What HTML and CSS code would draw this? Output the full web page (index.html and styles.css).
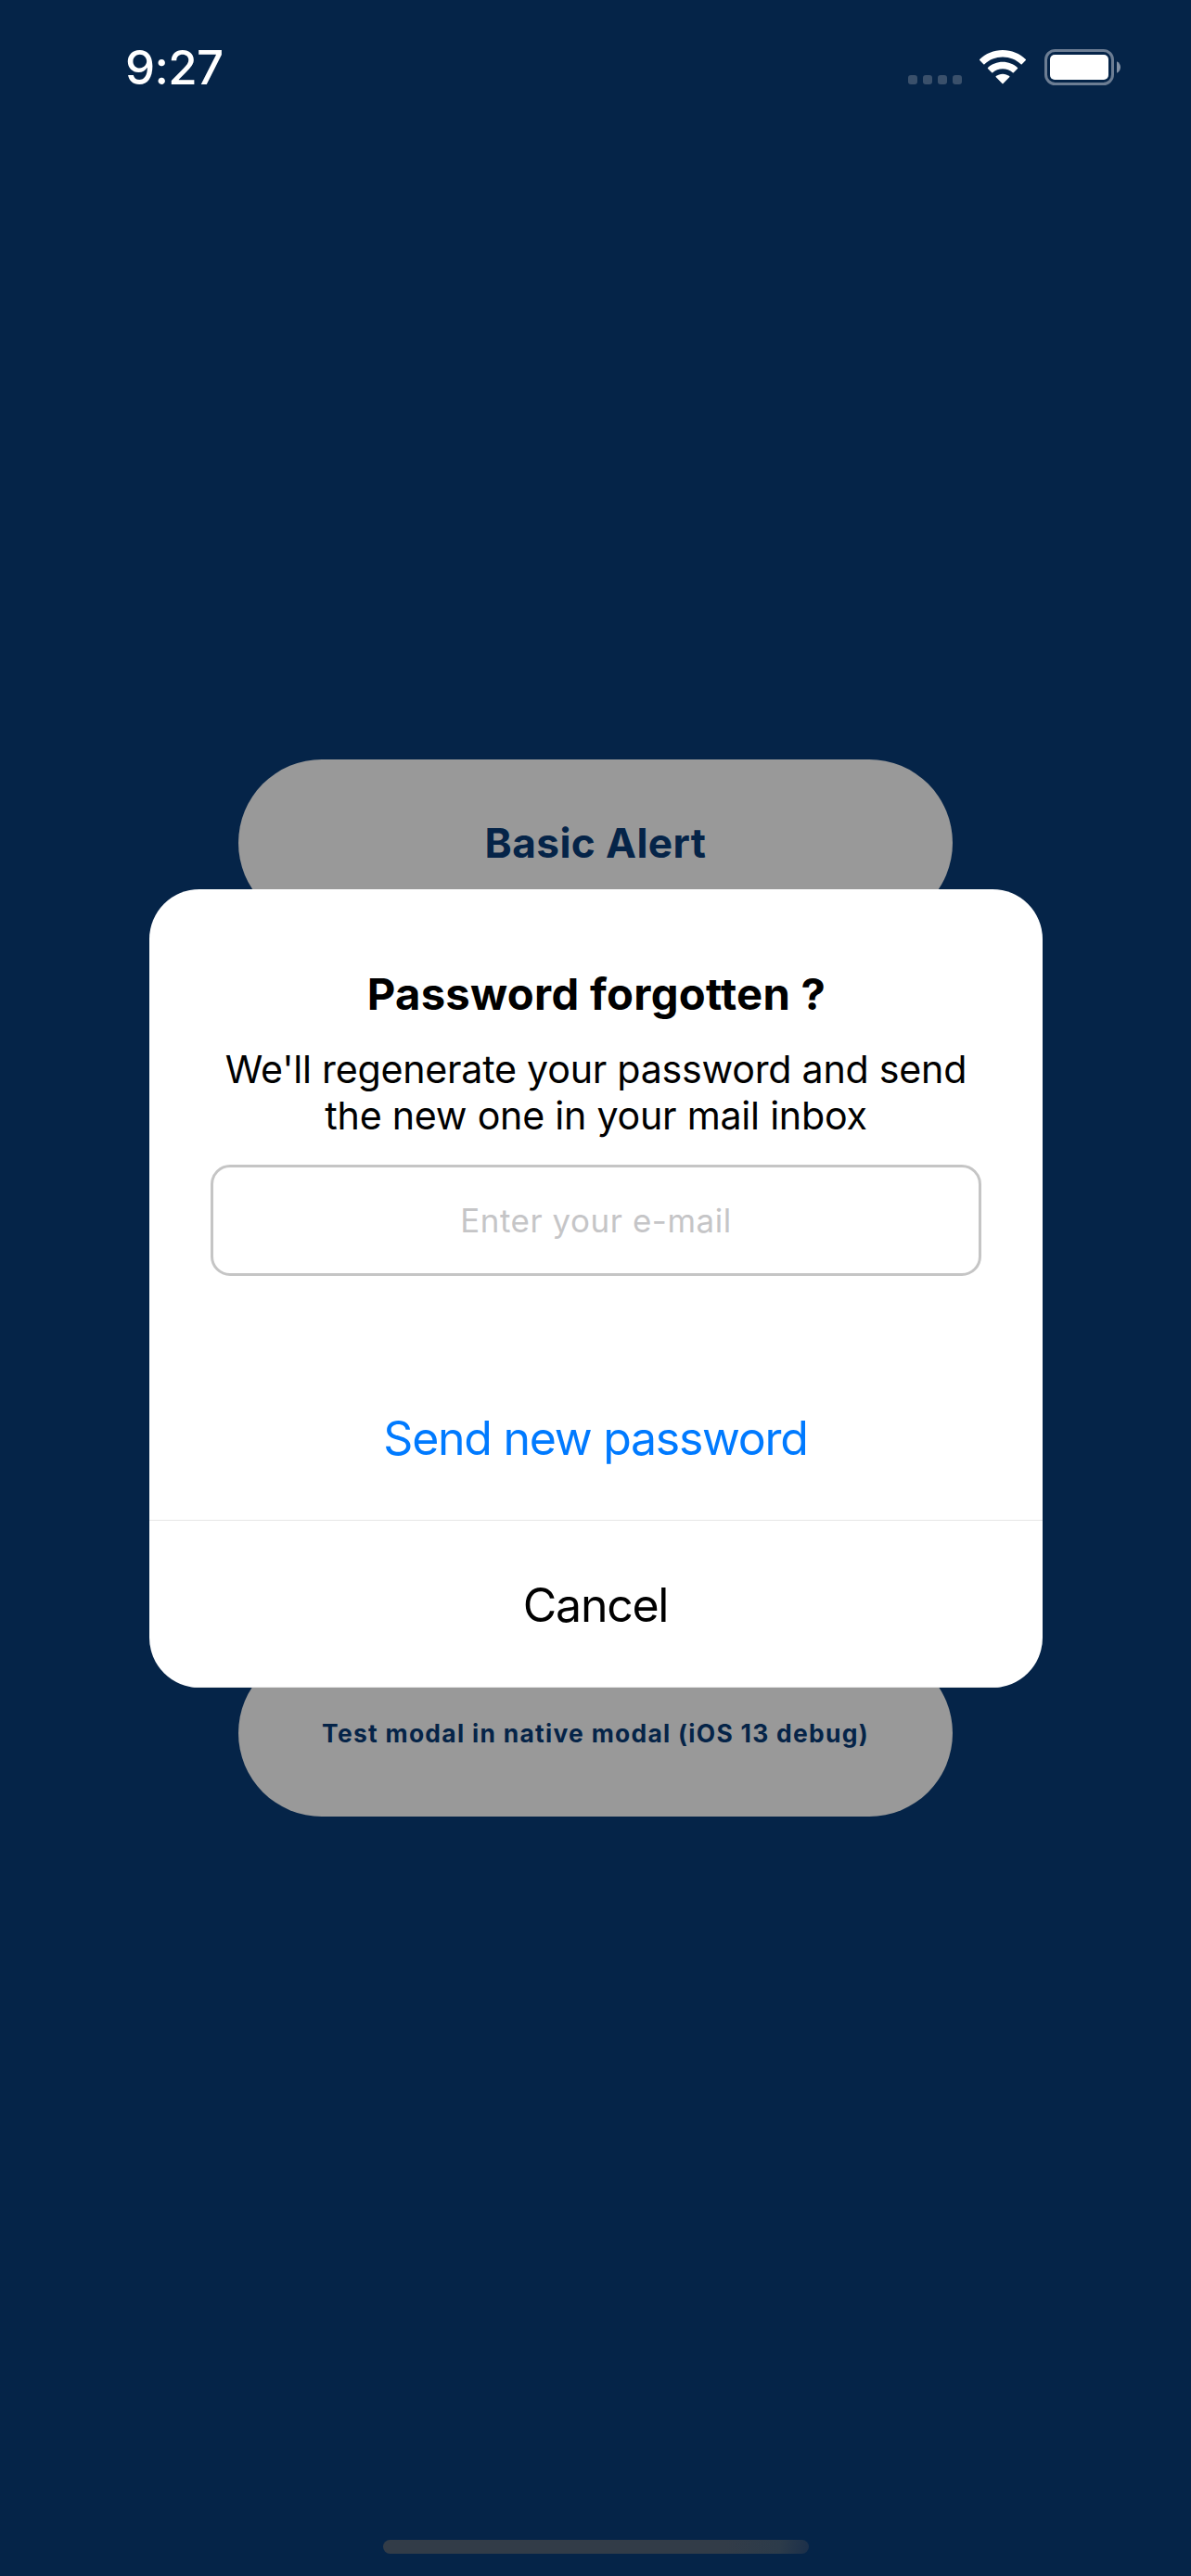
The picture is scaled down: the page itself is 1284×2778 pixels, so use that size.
FILE: index.html
```html
<!DOCTYPE html>
<html lang="en">
<head>
<meta charset="utf-8">
<title>Password forgotten</title>
<link rel="stylesheet" href="styles.css">
</head>
<body>
<header class="status-bar">
  <time class="clock">9:27</time>
  <div class="indicators">
    <div class="signal"><i></i><i></i><i></i><i></i></div>
    <svg class="wifi" viewBox="0 0 50 37" width="50" height="37" fill="#fff">
      <path d="M25 0C34.6 0 43.400 3.800 49.800 9.900Q50.300 10.500 49.800 11.100L45.700 15.200Q45.200 15.600 44.600 15.200C39.400 10.300 32.500 7.500 25 7.500S10.600 10.300 5.400 15.200Q4.800 15.600 4.300 15.200L.2 11.100Q-.3 10.500 .2 9.900C6.600 3.800 15.400 0 25 0Z"/>
      <path d="M25 12.800C31.100 12.800 36.700 15.100 41 18.900Q41.500 19.500 41 20L36.800 24.200Q36.300 24.700 35.700 24.200C32.900 21.700 29.100 20.300 25 20.300S17.100 21.700 14.300 24.200Q13.700 24.700 13.200 24.200L9 20Q8.500 19.500 9 18.900C13.300 15.100 18.900 12.800 25 12.800Z"/>
      <path d="M25 25.700C27.700 25.700 30.200 26.600 32.200 28.100Q32.800 28.700 32.200 29.300L25.600 36.100Q25 36.700 24.400 36.100L17.800 29.300Q17.200 28.700 17.800 28.100C19.800 26.600 22.300 25.700 25 25.700Z"/>
    </svg>
    <svg class="battery" viewBox="0 0 82 39" width="82" height="39">
      <rect x="1.500" y="1.500" width="72" height="36" rx="10" fill="none" stroke="#6c7d93" stroke-width="3"/>
      <rect x="6" y="6" width="63" height="27" rx="5" fill="#fff"/>
      <path d="M78 13.200C80.400 14.200 82 16.700 82 19.500S80.400 24.800 78 25.800Z" fill="#8291a5"/>
    </svg>
  </div>
</header>
<main class="menu">
  <button class="pill">Basic Alert</button>
  <button class="pill pill-small">Test modal in native modal (iOS 13 debug)</button>
</main>
<div class="home-indicator"></div>
<div class="overlay">
  <section class="dialog" role="dialog">
    <div class="dialog-body">
      <h1 class="title">Password forgotten ?</h1>
      <p class="message">We'll regenerate your password and send<br>the new one in your mail inbox</p>
      <input class="email" type="email" placeholder="Enter your e-mail">
    </div>
    <button class="action primary">Send new password</button>
    <button class="action">Cancel</button>
  </section>
</div>
</body>
</html>
```
FILE: styles.css
```css
* { box-sizing: border-box; }

body {
  margin: 0;
  width: 1284px;
  height: 2778px;
  display: flex;
  flex-direction: column;
  align-items: center;
  background: #052448;
  font-family: Inter, "Liberation Sans", sans-serif;
  overflow: hidden;
}

button, input {
  margin: 0;
  border: 0;
  background: none;
  font-family: inherit;
}

.status-bar {
  width: 100%;
  height: 819px;
  padding: 43px 76px 0 135px;
  display: flex;
  justify-content: space-between;
  align-items: flex-start;
}

.clock {
  color: #fff;
  font-size: 51px;
  font-weight: 550;
  line-height: 60px;
  letter-spacing: -0.7px;
}

.indicators {
  display: flex;
  padding-top: 10px;
}

.signal {
  display: flex;
  gap: 6px;
  padding-top: 28px;
  margin-right: 20px;
}

.signal i {
  width: 10px;
  height: 10px;
  border-radius: 3px;
  background: #3a506b;
}

.wifi { margin: 1px 20px 0 -1px; }

.menu {
  width: 770px;
  height: 1140px;
  display: flex;
  flex-direction: column;
  justify-content: space-between;
}

.pill {
  height: 180px;
  padding: 0;
  border-radius: 90px;
  background: #999;
  color: #052448;
  font-size: 44.2px;
  font-weight: 670;
  letter-spacing: 0.4px;
}

.pill-small {
  font-size: 26.4px;
  letter-spacing: 1.3px;
}

.home-indicator {
  width: 459px;
  height: 15px;
  margin-top: 780px;
  margin-left: 1px;
  border-radius: 7.5px;
  background: linear-gradient(100deg, #323c48 80%, #2c3b4a 93%, #1b2f4a 100%);
}

.overlay {
  position: absolute;
  inset: 0;
  padding: 959px 160px 0 161px;
}

.dialog {
  width: 963px;
  height: 861px;
  display: flex;
  flex-direction: column;
  border-radius: 54px;
  background: #fff;
  overflow: hidden;
}

.dialog-body {
  flex: 1;
  padding: 84px 66px 0;
  text-align: center;
}

.title {
  margin: 0 0 27px;
  padding-left: 1px;
  font-size: 47.2px;
  font-weight: 700;
  line-height: 58px;
  letter-spacing: 0.3px;
}

.message {
  margin: 0 0 28px;
  font-size: 41.2px;
  line-height: 50px;
  letter-spacing: -0.25px;
}

.email {
  display: block;
  width: 831px;
  height: 120px;
  border: 3px solid #c5c5c5;
  border-radius: 21px;
  text-align: center;
  font-size: 34.9px;
  letter-spacing: 0.583px;
}

.email::placeholder { color: #c5c5c7; }

.action {
  height: 180px;
  padding: 2px 1px 0 0;
  border-bottom: 1px solid #e6e6e6;
  color: #000;
  font-size: 50px;
  letter-spacing: -1.26px;
}

.primary { color: #007aff; }
```
